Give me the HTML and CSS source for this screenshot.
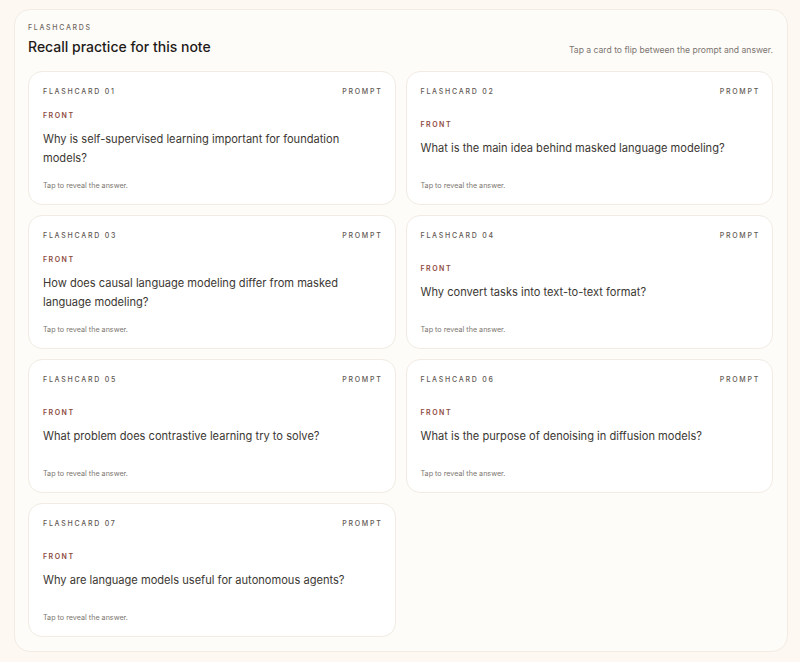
FILE: index.html
```html
<!DOCTYPE html>
<html lang="en">
<head>
<meta charset="utf-8">
<title>Flashcards</title>
<link rel="stylesheet" href="styles.css">
</head>
<body>
<section class="panel">
  <header class="panel-head">
    <div class="head-left">
      <div class="eyebrow">FLASHCARDS</div>
      <h1 class="title">Recall practice for this note</h1>
    </div>
    <p class="hint">Tap a card to flip between the prompt and answer.</p>
  </header>
  <div class="grid">
    <article class="card">
      <div class="card-top"><span class="label">FLASHCARD 01</span><span class="label">PROMPT</span></div>
      <div class="card-body"><div class="side">FRONT</div><p class="question">Why is self-supervised learning important for foundation models?</p></div>
      <div class="card-foot">Tap to reveal the answer.</div>
    </article>
    <article class="card">
      <div class="card-top"><span class="label">FLASHCARD 02</span><span class="label">PROMPT</span></div>
      <div class="card-body"><div class="side">FRONT</div><p class="question">What is the main idea behind masked language modeling?</p></div>
      <div class="card-foot">Tap to reveal the answer.</div>
    </article>
    <article class="card">
      <div class="card-top"><span class="label">FLASHCARD 03</span><span class="label">PROMPT</span></div>
      <div class="card-body"><div class="side">FRONT</div><p class="question">How does causal language modeling differ from masked language modeling?</p></div>
      <div class="card-foot">Tap to reveal the answer.</div>
    </article>
    <article class="card">
      <div class="card-top"><span class="label">FLASHCARD 04</span><span class="label">PROMPT</span></div>
      <div class="card-body"><div class="side">FRONT</div><p class="question">Why convert tasks into text-to-text format?</p></div>
      <div class="card-foot">Tap to reveal the answer.</div>
    </article>
    <article class="card">
      <div class="card-top"><span class="label">FLASHCARD 05</span><span class="label">PROMPT</span></div>
      <div class="card-body"><div class="side">FRONT</div><p class="question">What problem does contrastive learning try to solve?</p></div>
      <div class="card-foot">Tap to reveal the answer.</div>
    </article>
    <article class="card">
      <div class="card-top"><span class="label">FLASHCARD 06</span><span class="label">PROMPT</span></div>
      <div class="card-body"><div class="side">FRONT</div><p class="question">What is the purpose of denoising in diffusion models?</p></div>
      <div class="card-foot">Tap to reveal the answer.</div>
    </article>
    <article class="card">
      <div class="card-top"><span class="label">FLASHCARD 07</span><span class="label">PROMPT</span></div>
      <div class="card-body"><div class="side">FRONT</div><p class="question">Why are language models useful for autonomous agents?</p></div>
      <div class="card-foot">Tap to reveal the answer.</div>
    </article>
  </div>
</section>
</body>
</html>
```

FILE: styles.css
```css
* { box-sizing: border-box; }

html, body {
  margin: 0;
  background: #fdf8f1;
}

body {
  padding: 9px 12px 10px 14px;
  font-family: "Inter", "Liberation Sans", sans-serif;
  color: #34302c;
}

.panel {
  background: #fefcf9;
  border: 1px solid #f2ece3;
  border-radius: 16px;
  padding: 13px 14px 14px 13px;
}

.panel-head {
  display: flex;
  justify-content: space-between;
  align-items: flex-end;
  margin-bottom: 14px;
}

.eyebrow {
  font-size: 7px;
  line-height: 10px;
  letter-spacing: 1.7px;
  color: #6f6963;
  font-weight: 500;
}

.title {
  margin: 4px 0 0;
  font-size: 14px;
  line-height: 20px;
  font-weight: 500;
  color: #1e1b19;
}

.hint {
  margin: 0 0 1px;
  font-size: 8.6px;
  line-height: 12px;
  color: #7b756f;
}

.grid {
  display: grid;
  grid-template-columns: 1fr 1fr;
  gap: 10px;
}

.card {
  background: #ffffff;
  border: 1px solid #f1ebe3;
  border-radius: 14px;
  padding: 13px 14px 13px 14px;
  min-height: 134px;
  display: flex;
  flex-direction: column;
}

.card-top {
  display: flex;
  justify-content: space-between;
  height: 12px;
  align-items: center;
}

.label {
  font-size: 7px;
  letter-spacing: 1.75px;
  color: #5f5954;
  font-weight: 500;
}

.label:last-child { margin-right: -2px; }

.card-body {
  flex: 1;
  display: flex;
  flex-direction: column;
  justify-content: center;
}

.side {
  font-size: 7px;
  line-height: 10px;
  letter-spacing: 1.5px;
  color: #8d4b3e;
  font-weight: 600;
}

.question {
  margin: 9px 0 0;
  font-size: 11.1px;
  line-height: 19px;
  color: #3b3733;
}

.card-foot {
  font-size: 7.2px;
  line-height: 10px;
  color: #7b756f;
}
```
